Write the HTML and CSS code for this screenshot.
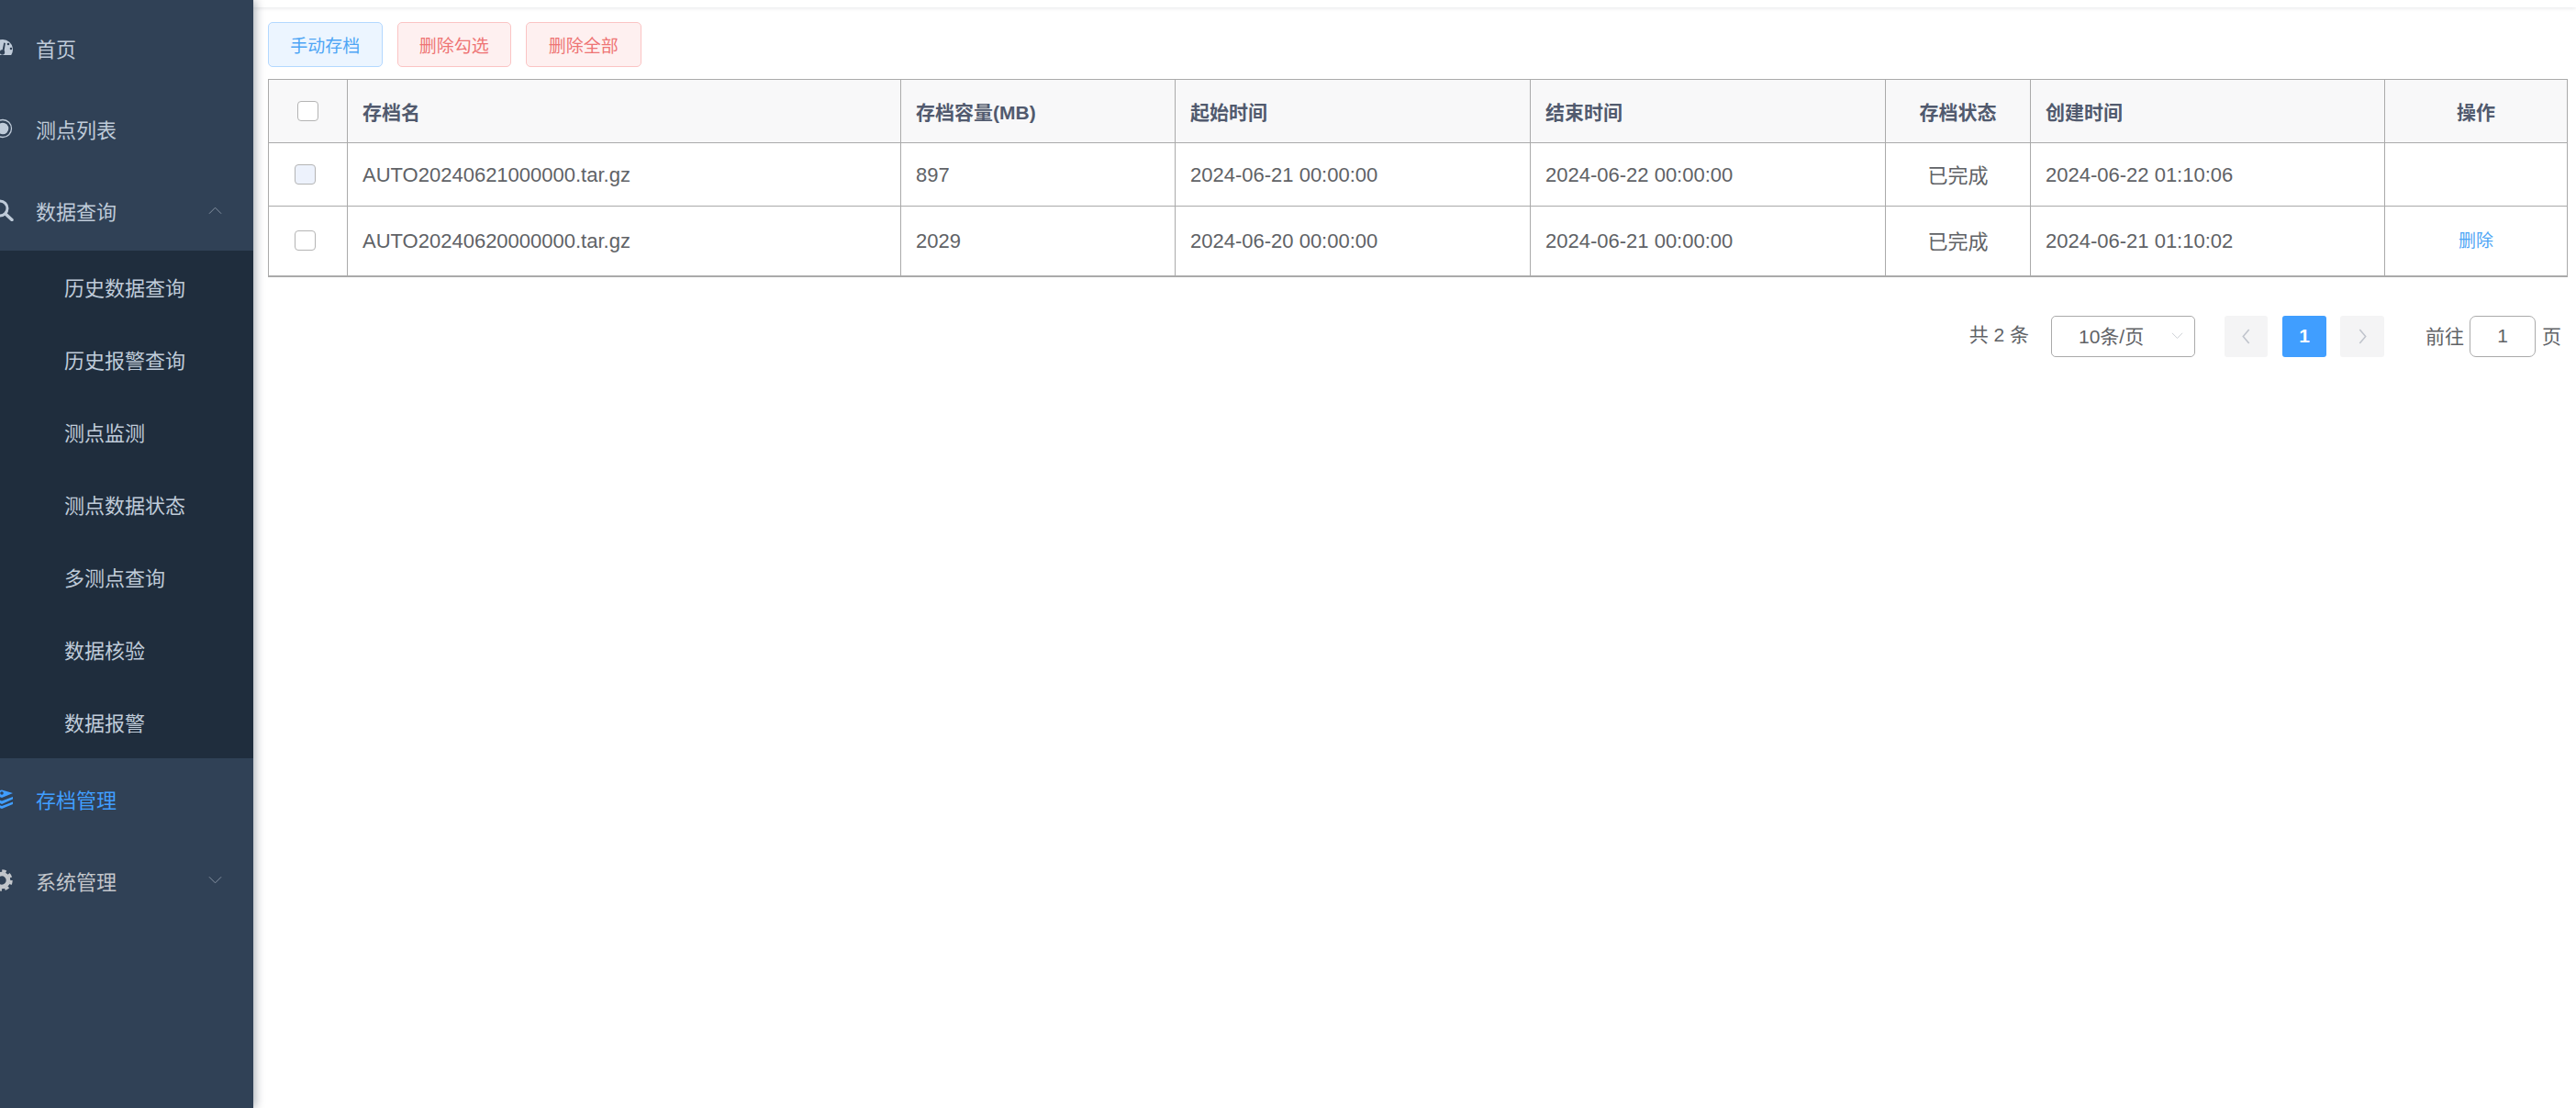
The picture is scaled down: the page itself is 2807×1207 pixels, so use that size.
FILE: index.html
```html
<!DOCTYPE html>
<html lang="zh-CN">
<head>
<meta charset="utf-8">
<title>存档管理</title>
<link rel="stylesheet" href="styles.css">
</head>
<body>
<div class="app">
  <aside class="sidebar">
    <nav class="menu">
      <div class="item">
        <svg class="ico" viewBox="0 0 28 24"><path fill="currentColor" d="M4.800 20A11 11 0 1 1 23.200 20z"/><g fill="#304156"><circle cx="23" cy="13" r="1.300"/><circle cx="20" cy="8" r="1.300"/><circle cx="13.500" cy="17" r="2.700"/><path d="M15.200 6.500l1.700.4-1.600 10-2-.4z"/></g></svg>
        <span>首页</span>
      </div>
      <div class="item">
        <svg class="ico" viewBox="0 0 28 24"><circle cx="14" cy="12" r="9.500" fill="none" stroke="currentColor" stroke-width="1.300"/><circle cx="14" cy="12" r="6.300" fill="currentColor"/></svg>
        <span>测点列表</span>
      </div>
      <div class="item third">
        <svg class="ico" viewBox="0 0 28 24"><circle cx="11" cy="10" r="8" fill="none" stroke="currentColor" stroke-width="3"/><path d="M17 16l7 6.500" fill="none" stroke="currentColor" stroke-width="3.400" stroke-linecap="round"/></svg>
        <span>数据查询</span>
        <svg class="arrow" viewBox="0 0 16 10"><path d="M1 9l7-7 7 7" fill="none" stroke="currentColor" stroke-width="1"/></svg>
      </div>
      <div class="submenu">
        <div class="subitem">历史数据查询</div>
        <div class="subitem">历史报警查询</div>
        <div class="subitem">测点监测</div>
        <div class="subitem">测点数据状态</div>
        <div class="subitem">多测点查询</div>
        <div class="subitem">数据核验</div>
        <div class="subitem">数据报警</div>
      </div>
      <div class="item active">
        <svg class="ico" viewBox="0 0 28 24"><path fill="currentColor" d="M13 2.500l12 3.500-12 5L1.500 6zM1.500 10l11.500 4.500L25 10v2.500L13 18 1.500 12.500zm0 5l11.500 5L25 15.500V18l-12 5-11.500-5z"/><circle cx="13" cy="6" r="1.800" fill="#304156"/></svg>
        <span>存档管理</span>
      </div>
      <div class="item gray">
        <svg class="ico" viewBox="0 0 28 24"><circle cx="13" cy="12" r="7" fill="none" stroke="currentColor" stroke-width="4.600"/><circle cx="13" cy="12" r="10.200" fill="none" stroke="currentColor" stroke-width="3" stroke-dasharray="4.500 3.500"/></svg>
        <span>系统管理</span>
        <svg class="arrow" viewBox="0 0 16 10"><path d="M1 1l7 7 7-7" fill="none" stroke="currentColor" stroke-width="1"/></svg>
      </div>
    </nav>
  </aside>
  <main class="main">
    <div class="topbar"></div>
    <div class="toolbar">
      <button class="btn btn-primary">手动存档</button>
      <button class="btn btn-danger">删除勾选</button>
      <button class="btn btn-danger btn-wide">删除全部</button>
    </div>
    <table class="grid">
      <colgroup>
        <col class="c1"><col class="c2"><col class="c3"><col class="c4"><col class="c5"><col class="c6"><col class="c7"><col class="c8">
      </colgroup>
      <thead>
        <tr>
          <th class="check head-check"><i class="box"></i></th>
          <th>存档名</th>
          <th>存档容量(MB)</th>
          <th>起始时间</th>
          <th>结束时间</th>
          <th class="center">存档状态</th>
          <th>创建时间</th>
          <th class="center">操作</th>
        </tr>
      </thead>
      <tbody>
        <tr>
          <td class="check"><i class="box box-off"></i></td>
          <td>AUTO20240621000000.tar.gz</td>
          <td>897</td>
          <td>2024-06-21 00:00:00</td>
          <td>2024-06-22 00:00:00</td>
          <td class="center">已完成</td>
          <td>2024-06-22 01:10:06</td>
          <td class="center"></td>
        </tr>
        <tr class="last">
          <td class="check"><i class="box"></i></td>
          <td>AUTO20240620000000.tar.gz</td>
          <td>2029</td>
          <td>2024-06-20 00:00:00</td>
          <td>2024-06-21 00:00:00</td>
          <td class="center">已完成</td>
          <td>2024-06-21 01:10:02</td>
          <td class="center"><a class="link">删除</a></td>
        </tr>
      </tbody>
    </table>
    <div class="pager">
      <span class="total">共 2 条</span>
      <div class="select">
        <span class="sel-text">10条/页</span>
        <svg class="sel-arrow" viewBox="0 0 16 10"><path d="M1 1l7 7 7-7" fill="none" stroke="currentColor" stroke-width="1"/></svg>
      </div>
      <div class="pbtn prev"><svg viewBox="0 0 10 16"><path d="M8 1L2 8l6 7" fill="none" stroke="currentColor" stroke-width="1.500"/></svg></div>
      <div class="pbtn on">1</div>
      <div class="pbtn"><svg viewBox="0 0 10 16"><path d="M2 1l6 7-6 7" fill="none" stroke="currentColor" stroke-width="1.500"/></svg></div>
      <span class="goto">前往</span>
      <div class="pinput">1</div>
      <span class="page-unit">页</span>
    </div>
  </main>
</div>
</body>
</html>
```
FILE: styles.css
```css
* { box-sizing: border-box; }
html, body { margin: 0; height: 100%; background: #fff; }
body {
  font-family: "Liberation Sans", "Noto Sans CJK SC", sans-serif;
  color: #606266;
  overflow: hidden;
}
.app { display: flex; height: 1207px; }

.sidebar {
  width: 276px;
  flex: none;
  background: #304156;
  box-shadow: 2px 0 10px rgba(0, 21, 41, .35);
  position: relative;
  z-index: 2;
  overflow: hidden;
}
.menu { padding-top: 8px; }
.item {
  height: 88px;
  display: flex;
  align-items: center;
  color: #bfcbd9;
  font-size: 22px;
  position: relative;
}
.item.third { height: 89px; }
.item.active { color: #409eff; height: 89px; padding-bottom: 2px; }
.item.gray { color: #c2c6cb; height: 89px; padding-bottom: 2px; }
.ico {
  width: 28px;
  height: 24px;
  margin-left: -11px;
  margin-right: 22px;
  flex: none;
}
.arrow {
  width: 15px;
  height: 10px;
  margin-left: auto;
  margin-right: 34px;
  color: #8a96a5;
}
.submenu { background: #1f2d3d; }
.subitem {
  height: 79px;
  display: flex;
  align-items: center;
  padding-left: 70px;
  padding-bottom: 2px;
  color: #bfcbd9;
  font-size: 22px;
}

.main { flex: 1; min-width: 0; padding-left: 16px; padding-right: 9px; }
.topbar {
  height: 8px;
  margin: 0 -9px 0 -16px;
  box-shadow: 0 1px 4px rgba(0, 21, 41, .1);
}
.toolbar { display: flex; margin-top: 16px; height: 49px; }
.btn {
  width: 124.500px;
  height: 49px;
  border-radius: 5px;
  font: 19px "Liberation Sans", "Noto Sans CJK SC", sans-serif;
  padding: 0;
  margin-right: 16px;
}
.btn-wide { width: 125.500px; }
.btn-primary { background: #ecf5ff; border: 1px solid #b3d8ff; color: #4ea5f5; }
.btn-danger { background: #fef0f0; border: 1px solid #fbc4c4; color: #ee7474; }

.grid {
  width: 2505px;
  margin-top: 13px;
  table-layout: fixed;
  border-collapse: collapse;
  font-size: 22px;
  border: 1px solid #aaa;
  border-bottom-width: 2px;
}
.c1 { width: 86px; }
.c2 { width: 603px; }
.c3 { width: 299px; }
.c4 { width: 387px; }
.c5 { width: 387px; }
.c6 { width: 158px; }
.c7 { width: 386px; }
.c8 { width: 199px; }
.grid th, .grid td {
  border: 1px solid #aaa;
  padding: 0 16px;
  text-align: left;
  height: 69px;
}
.grid td { padding-top: 2px; }
.grid td.center { padding-top: 0; padding-bottom: 3px; }
.grid th {
  background: #f8f8f9;
  color: #515a6e;
  font-size: 21px;
  font-weight: 700;
}
.grid .last td { height: 76px; border-bottom: 2px solid #aaa; }
.grid .center { text-align: center; }
.grid .check { padding: 0 0 0 28px; font-size: 0; }
.grid .head-check { padding-left: 31px; }
.box {
  display: inline-block;
  width: 23px;
  height: 22px;
  background: #fff;
  border: 1px solid #b4b4b4;
  border-radius: 4px;
}
.box-off { background: #edf2fc; }
.link { color: #4ea5f5; font-size: 19px; }

.pager {
  display: flex;
  align-items: center;
  height: 45px;
  margin-top: 42px;
  font-size: 21px;
  width: 2506px;
  justify-content: flex-end;
}
.total { margin-right: 24px; padding-bottom: 6px; }
.select {
  width: 157px;
  height: 45px;
  border: 1px solid #aaa;
  border-radius: 5px;
  display: flex;
  align-items: center;
  padding-left: 29px;
  margin-right: 32px;
  position: relative;
}
.sel-text { padding-bottom: 2px; }
.sel-arrow {
  width: 13px;
  height: 8px;
  margin-left: auto;
  margin-right: 12px;
  color: #c0c4cc;
}
.pbtn {
  width: 48px;
  height: 45px;
  border-radius: 3px;
  background: #f4f4f5;
  color: #c0c4cc;
  display: flex;
  align-items: center;
  justify-content: center;
  font-weight: 700;
}
.pbtn.prev { width: 47px; margin-right: 16px; }
.pbtn svg { width: 11px; height: 17px; }
.pbtn.on { background: #409eff; color: #fff; margin-right: 15px; }
.goto { margin-left: 45px; margin-right: 6px; padding-bottom: 2px; }
.pinput {
  width: 72px;
  height: 45px;
  border: 1px solid #aaa;
  border-radius: 7px;
  display: flex;
  align-items: center;
  justify-content: center;
  margin-right: 7px;
}
.page-unit { margin-right: 7px; padding-bottom: 2px; }
```
